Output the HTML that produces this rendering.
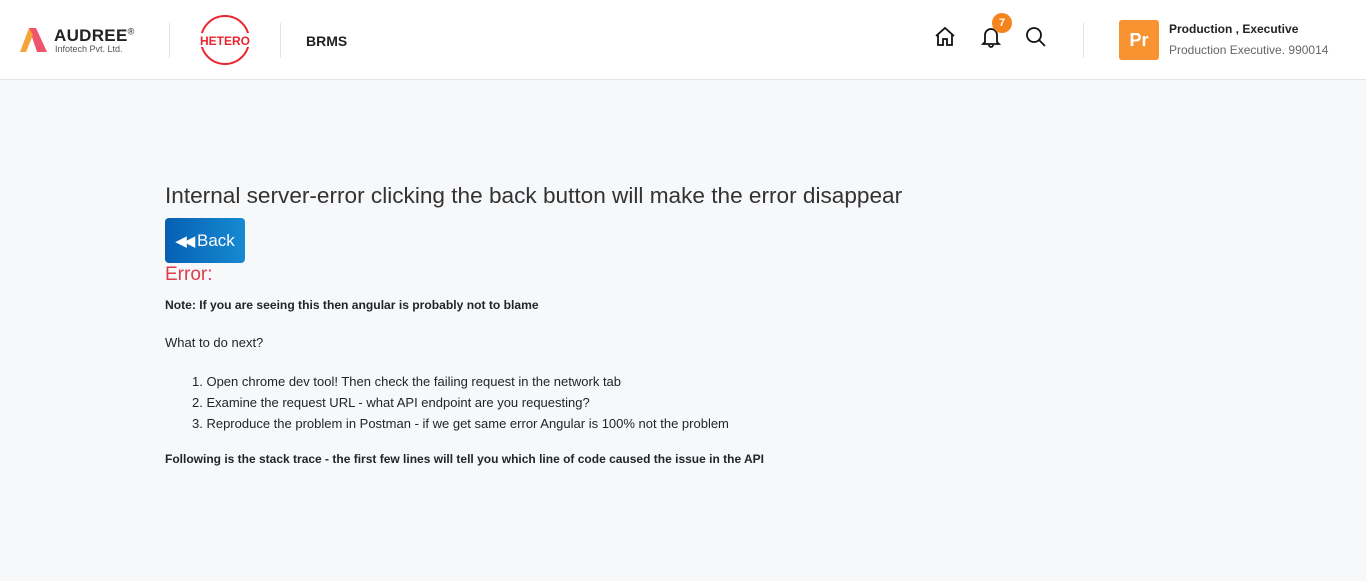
<!DOCTYPE html>
<html><head><meta charset="utf-8"><style>
*{margin:0;padding:0;box-sizing:border-box}
body{width:1366px;height:581px;background:#f7f8fa;font-family:"Liberation Sans",sans-serif;color:#212529;overflow:hidden;position:relative}
.hdr{position:absolute;left:0;top:0;width:1366px;height:80px;background:#fff;border-bottom:1px solid #e3e5e8}
.abs{position:absolute}
.sep{position:absolute;top:23px;width:1px;height:35px;background:#e2e2e2}
.main{position:absolute;left:165px;top:180px;font-size:13px}
.main div{white-space:nowrap}
</style></head><body>
<div class="hdr">
 <svg class="abs" style="left:20px;top:28px" width="28" height="25" viewBox="0 0 28 25"><polygon points="9,0 16,0 27,24 17,24" fill="#f0546b"/><polygon points="9,0 13,7 6,24 0,24" fill="#f5a23a"/><circle cx="13.5" cy="20" r="2" fill="#fff"/></svg>
 <div class="abs" style="left:54px;top:26px;font-size:17px;font-weight:bold;color:#222;letter-spacing:0.3px">AUDREE<sup style="font-size:9px;font-weight:normal">®</sup></div>
 <div class="abs" style="left:55px;top:44px;font-size:9px;color:#555">Infotech Pvt. Ltd.</div>
 <div class="sep" style="left:169px"></div>
 <svg class="abs" style="left:194px;top:14px" width="62" height="52" viewBox="0 0 62 52"><circle cx="31" cy="26" r="24" fill="none" stroke="#e8262f" stroke-width="2"/><rect x="0" y="19" width="62" height="14" fill="#fff"/><text x="31" y="31" text-anchor="middle" font-family="Liberation Sans" font-weight="bold" font-size="12" fill="#e8262f">HETERO</text></svg>
 <div class="sep" style="left:280px"></div>
 <div class="abs" style="left:306px;top:33px;font-size:14px;font-weight:bold;color:#222">BRMS</div>
 <svg class="abs" style="left:934px;top:26px" width="22" height="22" viewBox="0 0 22 22" fill="none" stroke="#111" stroke-width="1.8"><path d="M2 10L11 2l9 8M4 8v11h5v-6h4v6h5V8"/></svg>
 <svg class="abs" style="left:981px;top:26px" width="20" height="22" viewBox="0 0 20 22" fill="none" stroke="#111" stroke-width="1.8"><path d="M4 16V9a6 6 0 0112 0v7l2 2H2z M8 19a2 2 0 004 0"/></svg>
 <div class="abs" style="left:992px;top:13px;width:20px;height:20px;border-radius:50%;background:#f5841f;color:#fff;font-size:11px;font-weight:bold;text-align:center;line-height:20px">7</div>
 <svg class="abs" style="left:1025px;top:26px" width="24" height="22" viewBox="0 0 24 22" fill="none" stroke="#111" stroke-width="1.8"><circle cx="9" cy="9" r="7"/><path d="M14 14l6 6"/></svg>
 <div class="sep" style="left:1083px"></div>
 <div class="abs" style="left:1119px;top:20px;width:40px;height:40px;border-radius:3px;background:#f79331;color:#fff;font-weight:bold;font-size:18px;text-align:center;line-height:40px">Pr</div>
 <div class="abs" style="left:1169px;top:22px;font-size:12px;font-weight:bold;color:#222">Production , Executive</div>
 <div class="abs" style="left:1169px;top:43px;font-size:12px;color:#666">Production Executive. 990014</div>
</div>
<div class="main">
 <div style="font-size:22.6px;color:#333;position:absolute;top:3px">Internal server-error clicking the back button will make the error disappear</div>
 <div style="position:absolute;top:38px;width:80px;height:45px;border-radius:4px;background:linear-gradient(90deg,#0660b4,#168ad2);color:#fff;font-size:17px;line-height:45px;text-align:center"><span style="letter-spacing:-3px;font-size:15px">◀◀</span>&nbsp;Back</div>
 <div style="position:absolute;top:84px;font-size:19px;color:#e03c4a">Error:</div>
 <div style="position:absolute;top:118px;font-weight:bold;font-size:12.1px">Note: If you are seeing this then angular is probably not to blame</div>
 <div style="position:absolute;top:155px">What to do next?</div>
 <div style="position:absolute;top:191px;left:27px;line-height:21px">1. Open chrome dev tool! Then check the failing request in the network tab<br>2. Examine the request URL - what API endpoint are you requesting?<br>3. Reproduce the problem in Postman - if we get same error Angular is 100% not the problem</div>
 <div style="position:absolute;top:272px;font-weight:bold;font-size:12px">Following is the stack trace - the first few lines will tell you which line of code caused the issue in the API</div>
</div>
</body></html>
